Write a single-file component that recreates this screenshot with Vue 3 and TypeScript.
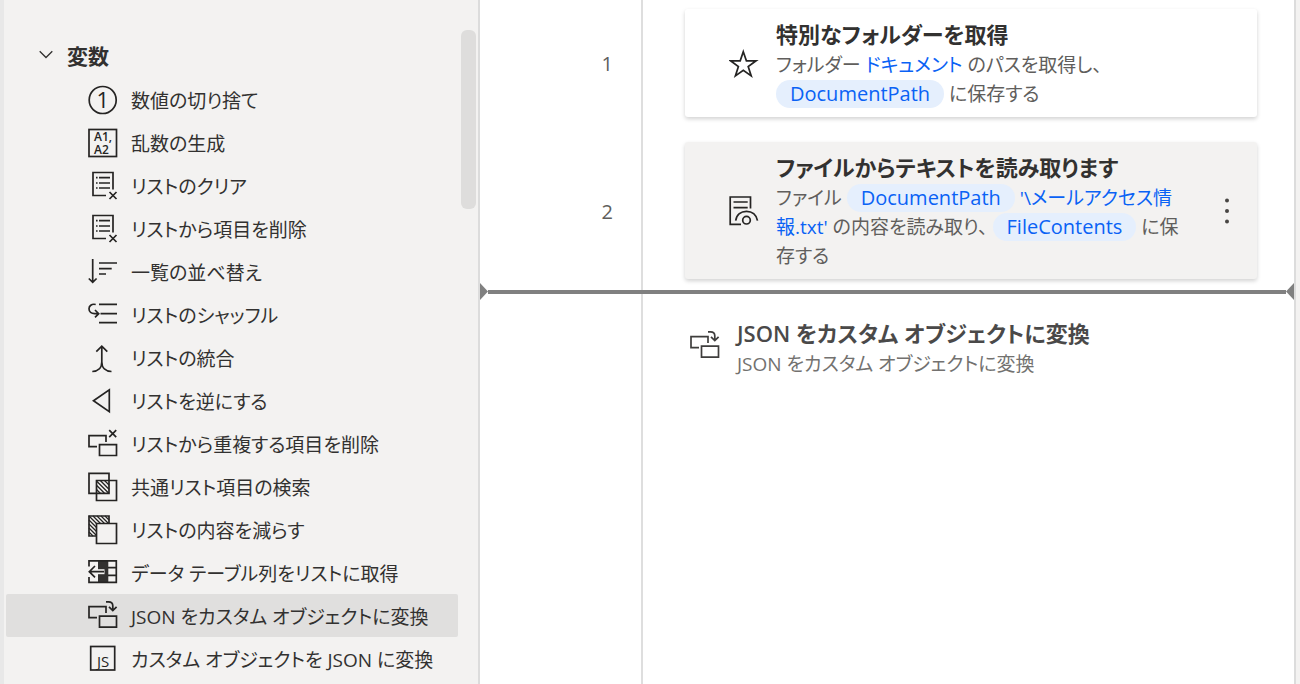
<script setup lang="ts">
import { ref } from 'vue'

interface Glyph {
  x: number
  y: number
  size: number
  weight: number
  text: string
}

interface Action {
  icon: string
  label: string
  glyphs?: Glyph[]
}

const actions: Action[] = [
  { icon: 'truncate', label: '数値の切り捨て', glyphs: [{ x: 8.5, y: 24, size: 22, weight: 400, text: '1' }] },
  {
    icon: 'random',
    label: '乱数の生成',
    glyphs: [
      { x: 6, y: 14, size: 12, weight: 600, text: 'A1,' },
      { x: 6, y: 27, size: 12, weight: 600, text: 'A2' },
    ],
  },
  { icon: 'listx', label: 'リストのクリア' },
  { icon: 'listx', label: 'リストから項目を削除' },
  { icon: 'sort', label: '一覧の並べ替え' },
  { icon: 'shuffle', label: 'リストのシャッフル' },
  { icon: 'merge', label: 'リストの統合' },
  { icon: 'reverse', label: 'リストを逆にする' },
  { icon: 'dedupe', label: 'リストから重複する項目を削除' },
  { icon: 'common', label: '共通リスト項目の検索' },
  { icon: 'subtract', label: 'リストの内容を減らす' },
  { icon: 'column', label: 'データ テーブル列をリストに取得' },
  { icon: 'convert', label: 'JSON をカスタム オブジェクトに変換' },
  {
    icon: 'js',
    label: 'カスタム オブジェクトを JSON に変換',
    glyphs: [{ x: 9, y: 24, size: 15, weight: 500, text: 'JS' }],
  },
]

const selected = ref(12)
const open = ref(true)
</script>

<template>
  <div class="app">
    <svg class="defs" aria-hidden="true">
      <symbol id="i-truncate" viewBox="0 0 30 31">
        <circle cx="14.7" cy="16" r="13.5" />
      </symbol>
      <symbol id="i-random" viewBox="0 0 30 31">
        <rect x="1" y="2.5" width="27.5" height="27" />
      </symbol>
      <symbol id="i-listx" viewBox="0 0 30 31">
        <path d="M18 25.5H5V2.5H25V19.5" />
        <path d="M11 7.7H22M11 13H22M11 18H22M8 7.7H9.6M8 13H9.6M8 18H9.6M21.5 22L28.5 29M28.5 22L21.5 29" />
      </symbol>
      <symbol id="i-sort" viewBox="0 0 30 31">
        <path d="M4.7 3V26M.8 22.5L4.7 26.4L8.6 22.5M11 7H29M11 12.7H23.7M11 18H18" />
      </symbol>
      <symbol id="i-shuffle" viewBox="0 0 30 31">
        <path d="M11 5.3H29M12.5 14.7H29M11 23.7H29M7.7 5.5C3.5 4.5 1 7 1 9.8C1 13 3.5 14.7 6.5 14.7H10.5M7 11L10.7 14.7L7 18.4" />
      </symbol>
      <symbol id="i-merge" viewBox="0 0 30 31">
        <path d="M13.8 4V20C13.8 26 10 29.5 4.3 29.5M13.8 20C13.8 26 17.6 29.5 23.5 29.5M8.3 9.7L13.8 4.2L19.3 9.7" />
      </symbol>
      <symbol id="i-reverse" viewBox="0 0 30 31">
        <path d="M5.5 15.7L21.3 4.8V26.6Z" />
      </symbol>
      <symbol id="i-dedupe" viewBox="0 0 30 31">
        <path d="M9 18.7H1V7.7H18V14M11.5 16.7H28.5V27.5H11.5ZM21.2 2.2L28.2 9.2M28.2 2.2L21.2 9.2" />
      </symbol>
      <symbol id="i-common" viewBox="0 0 30 31">
        <path d="M1 2.3H21V22.3H1ZM8.5 9.5H28.5V29.5H8.5Z" />
        <path class="hatch" d="M8.5 18.5L12.3 22.3M8.5 14.3L16.5 22.3M8.5 10L20.8 22.3M12.3 9.5L21 18.2M16.5 9.5L21 14" />
      </symbol>
      <symbol id="i-subtract" viewBox="0 0 30 31">
        <path d="M8.5 22H1V2H21V9.3M8.5 9.5H28.5V29.5H8.5Z" />
        <path class="hatch" d="M1 18L5 22M1 14L8.5 21.5M1 10L8.5 17.5M1 6L8.5 13.5M1 2L8.5 9.5M5 2L12.5 9.5M9 2L16.5 9.5M13 2L20.5 9.5M17 2L21 6" />
      </symbol>
      <symbol id="i-column" viewBox="0 0 30 31">
        <path class="solid" d="M10 3H20.3V26H10Z" />
        <path d="M1 9.5V3.8H28.3V25.3H1V20M20 10.7H28M20 18.3H28" />
        <path class="halo" d="M16.5 14.7H2" />
        <path d="M16 14.7H1.5M7 9L1.3 14.7L7 20.4" />
      </symbol>
      <symbol id="i-convert" viewBox="0 0 30 31">
        <path d="M9 17.7H1V6.7H18V13M11.5 16.2H28.5V27.2H11.5ZM18 1.8H20.5C23.5 1.8 24.8 3 24.8 5.8V10M21 6.8L24.8 10.6L28.6 6.8" />
      </symbol>
      <symbol id="i-js" viewBox="0 0 30 31">
        <rect x="2.7" y="3.5" width="24" height="23.5" />
      </symbol>
      <symbol id="i-star" viewBox="0 0 30 31">
        <path d="M14.3 3.7L17.4 12.8H27.1L19.2 18.6L22.2 27.9L14.3 22.2L6.4 27.9L9.4 18.6L1.5 12.8H11.2Z" />
      </symbol>
      <symbol id="i-read" viewBox="0 0 30 31">
        <path d="M12 29.3H1.2V2H21.5V13.5M4.5 7H18.7M4.5 12.7H18.7M6.7 25.7C7.5 19.5 12 16.3 17.5 16.3C23 16.3 27.5 19.5 28.5 25.7" />
        <circle cx="17.5" cy="25.2" r="3.8" />
      </symbol>
    </svg>

    <aside class="sidebar">
      <nav class="tree" aria-label="アクション">
        <button class="group" type="button" :aria-expanded="open" @click="open = !open">
          <svg class="chevron" viewBox="0 0 14 9"><path d="M.7 1.2L7 7.5L13.3 1.2" /></svg>
          変数
        </button>
        <ul v-if="open" class="list">
          <li v-for="(a, i) in actions" :key="a.label">
            <button class="item" :class="{ selected: i === selected }" type="button" @click="selected = i">
              <svg class="icon" viewBox="0 0 30 31">
                <use :href="'#i-' + a.icon" />
                <text
                  v-for="g in a.glyphs"
                  :key="g.text"
                  :x="g.x"
                  :y="g.y"
                  :font-size="g.size"
                  :font-weight="g.weight"
                >{{ g.text }}</text>
              </svg>
              <span>{{ a.label }}</span>
            </button>
          </li>
        </ul>
      </nav>
      <div class="track"><div class="thumb"></div></div>
    </aside>

    <main class="flow">
      <div class="gutter"></div>

      <div class="num first">1</div>
      <article class="card first">
        <svg class="icon"><use href="#i-star" /></svg>
        <div class="body">
          <h2>特別なフォルダーを取得</h2>
          <p>フォルダー <a href="#">ドキュメント</a> のパスを取得し、 <a href="#" class="pill">DocumentPath</a> に保存する</p>
        </div>
      </article>

      <div class="num second">2</div>
      <article class="card second active">
        <svg class="icon"><use href="#i-read" /></svg>
        <div class="body">
          <h2>ファイルからテキストを読み取ります</h2>
          <p>ファイル <a href="#" class="pill">DocumentPath</a> <a href="#">'\メールアクセス情報.txt'</a> の内容を読み取り、 <a href="#" class="pill">FileContents</a> に保存する</p>
        </div>
        <button class="more" type="button" aria-label="その他">
          <svg viewBox="0 0 6 26"><circle cx="3" cy="2.5" r="2" /><circle cx="3" cy="13" r="2" /><circle cx="3" cy="23.5" r="2" /></svg>
        </button>
      </article>

      <div class="drop">
        <svg class="tip" viewBox="0 0 8 17"><path d="M0 0L8 8.5L0 17Z" /></svg>
        <div class="bar"></div>
        <svg class="tip" viewBox="0 0 8 17"><path d="M8 0L0 8.5L8 17Z" /></svg>
      </div>

      <div class="ghost">
        <svg class="icon"><use href="#i-convert" /></svg>
        <div>
          <h2>JSON をカスタム オブジェクトに変換</h2>
          <p>JSON をカスタム オブジェクトに変換</p>
        </div>
      </div>
    </main>
    <div class="edge"></div>
  </div>
</template>

<style>
body {
  margin: 0;
}
</style>

<style scoped>
.app {
  display: flex;
  height: 100vh;
  overflow: hidden;
  background: #fff;
  color: #323130;
  font-family: "Open Sans", "Noto Sans CJK JP", sans-serif;
  font-size: 19px;
  font-weight: 400;
  font-feature-settings: "palt";
}
.defs {
  position: absolute;
  width: 0;
  height: 0;
}
button {
  border: 0;
  padding: 0;
  background: none;
  color: inherit;
  font: inherit;
  font-feature-settings: inherit;
  text-align: left;
  cursor: pointer;
}
.icon {
  flex: none;
  width: 30px;
  height: 31px;
  fill: none;
  stroke: #252423;
  stroke-width: 1.7;
}
text {
  fill: #252423;
  stroke: none;
}
.hatch {
  stroke-width: 1.3;
}
.solid {
  fill: #323130;
  stroke: none;
}
.halo {
  stroke: #f3f2f1;
  stroke-width: 5;
}
.sidebar {
  box-sizing: border-box;
  flex: none;
  display: flex;
  width: 480px;
  overflow: hidden;
  border-left: 4px solid #e8e8e8;
  border-right: 2px solid #dcdcdc;
  background: #f3f2f1;
}
.tree {
  flex: 1;
  min-width: 0;
  padding: 35px 3px 0 2px;
}
.group {
  box-sizing: border-box;
  display: flex;
  align-items: center;
  gap: 14px;
  width: 100%;
  height: 43px;
  padding: 0 0 4px 33px;
  font-size: 21px;
  font-weight: 600;
}
.chevron {
  width: 14px;
  height: 9px;
  fill: none;
  stroke: #323130;
  stroke-width: 1.3;
}
.list {
  margin: 0;
  padding: 0;
  list-style: none;
}
.item {
  display: flex;
  align-items: center;
  gap: 13px;
  width: 100%;
  height: 43px;
  padding-left: 82px;
  border-radius: 2px;
  white-space: nowrap;
}
.selected {
  background: #e0dfde;
}
.track {
  width: 17px;
  padding-top: 30px;
}
.thumb {
  width: 15px;
  height: 179px;
  border-radius: 6px;
  background: #dedddc;
}
.flow {
  flex: 1;
  min-width: 0;
  display: grid;
  grid-template-columns: 163px 1fr;
  grid-template-rows: auto auto 17px 1fr;
  padding-top: 9px;
}
.gutter {
  grid-area: 1 / 1 / 5 / 2;
  margin-top: -9px;
  border-right: 2px solid #dedede;
}
.num {
  align-self: center;
  padding-right: 30px;
  color: #605e5c;
  font-size: 20px;
  text-align: right;
}
.num.first {
  grid-area: 1 / 1;
  padding-bottom: 25px;
}
.num.second {
  grid-area: 2 / 1;
  padding-bottom: 2px;
}
.card {
  display: flex;
  align-items: center;
  margin: 0 37px 0 42px;
  padding: 8px 15px 8px 44px;
  border-radius: 3px;
  background: #fff;
  box-shadow: 0 2px 4px rgba(0, 0, 0, 0.18);
}
.card.first {
  grid-area: 1 / 2;
  margin-bottom: 25px;
  padding-right: 61px;
}
.card.second {
  grid-area: 2 / 2;
  margin-bottom: 4px;
}
.active {
  background: #f3f2f1;
}
.body {
  flex: 1;
  margin-left: 17px;
}
h2 {
  margin: 0;
  font-size: 22px;
  font-weight: 600;
  line-height: 34px;
}
p {
  margin: 0;
  color: #605e5c;
  line-height: 29px;
}
a {
  color: #0a62f5;
  text-decoration: none;
}
.pill {
  display: inline-block;
  height: 28px;
  padding: 0 14px;
  border-radius: 14px;
  background: #e5effd;
  font-size: 20px;
  line-height: 28px;
  vertical-align: top;
}
.more {
  display: flex;
  justify-content: center;
  width: 30px;
  margin-left: 16px;
}
.more svg {
  width: 6px;
  height: 26px;
  fill: #484644;
}
.drop {
  grid-area: 3 / 1 / 4 / 3;
  display: flex;
  align-items: center;
}
.bar {
  flex: 1;
  height: 4px;
  background: #808080;
}
.tip {
  width: 8px;
  height: 17px;
  fill: #808080;
}
.ghost {
  grid-area: 4 / 2;
  display: flex;
  align-items: flex-start;
  gap: 17px;
  padding: 16px 0 0 47px;
  opacity: 0.88;
}
.ghost .icon {
  margin-top: 14px;
}
.edge {
  flex: none;
  width: 4px;
  border-left: 2px solid #dcdcdc;
  background: #f3f2f1;
}
</style>
